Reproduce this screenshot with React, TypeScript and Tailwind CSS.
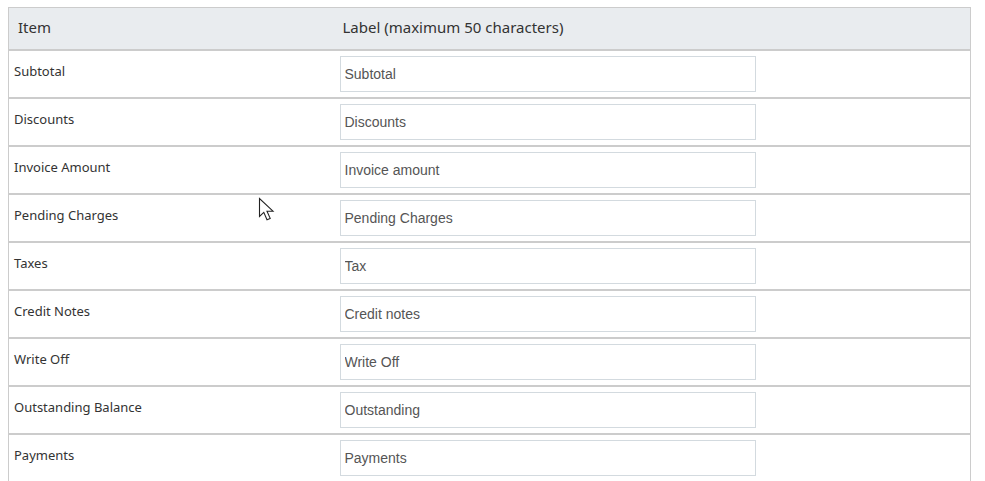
const rows = [
  { item: 'Subtotal', label: 'Subtotal' },
  { item: 'Discounts', label: 'Discounts' },
  { item: 'Invoice Amount', label: 'Invoice amount' },
  { item: 'Pending Charges', label: 'Pending Charges' },
  { item: 'Taxes', label: 'Tax' },
  { item: 'Credit Notes', label: 'Credit notes' },
  { item: 'Write Off', label: 'Write Off' },
  { item: 'Outstanding Balance', label: 'Outstanding' },
  { item: 'Payments', label: 'Payments' },
];

function Cursor() {
  return (
    <svg className="absolute left-[258px] top-[197px]" width="20" height="26" viewBox="0 0 20 26">
      <path
        d="M1.5 1.5 L1.5 19.5 L5.8 15.4 L9 22.8 L12.2 21.4 L9 14.2 L15 14.2 Z"
        fill="#fff"
        stroke="#222"
        strokeWidth="1.1"
      />
    </svg>
  );
}

export default function App() {
  return (
    <div className="relative h-[481px] w-[985px] overflow-hidden bg-white pl-[8px] pt-[7px] font-['Noto_Sans',sans-serif]">
      <table className="w-[963px] border-collapse border border-[#cccccc] text-left">
        <thead>
          <tr className="h-[42px] border-b-2 border-[#cccccc] bg-[#e9ecef] text-[15px] text-[#333333]">
            <th className="w-[325px] px-[9px] pb-[2px] font-normal">Item</th>
            <th className="px-[9px] pb-[2px] font-normal">Label (maximum 50 characters)</th>
          </tr>
        </thead>
        <tbody>
          {rows.map((row) => (
            <tr key={row.item} className="h-[48px] border-b-2 border-[#cccccc]">
              <td className="px-[5px] pb-[4px] align-middle text-[13px] text-[#333333]">{row.item}</td>
              <td className="px-[6px] py-[5px]">
                <input
                  readOnly
                  value={row.label}
                  className="h-[36px] w-[416px] border border-[#d3dadf] px-[4px] font-['Liberation_Sans',Arial,sans-serif] text-[14px] text-[#555555] outline-none"
                />
              </td>
            </tr>
          ))}
        </tbody>
      </table>
      <Cursor />
    </div>
  );
}
